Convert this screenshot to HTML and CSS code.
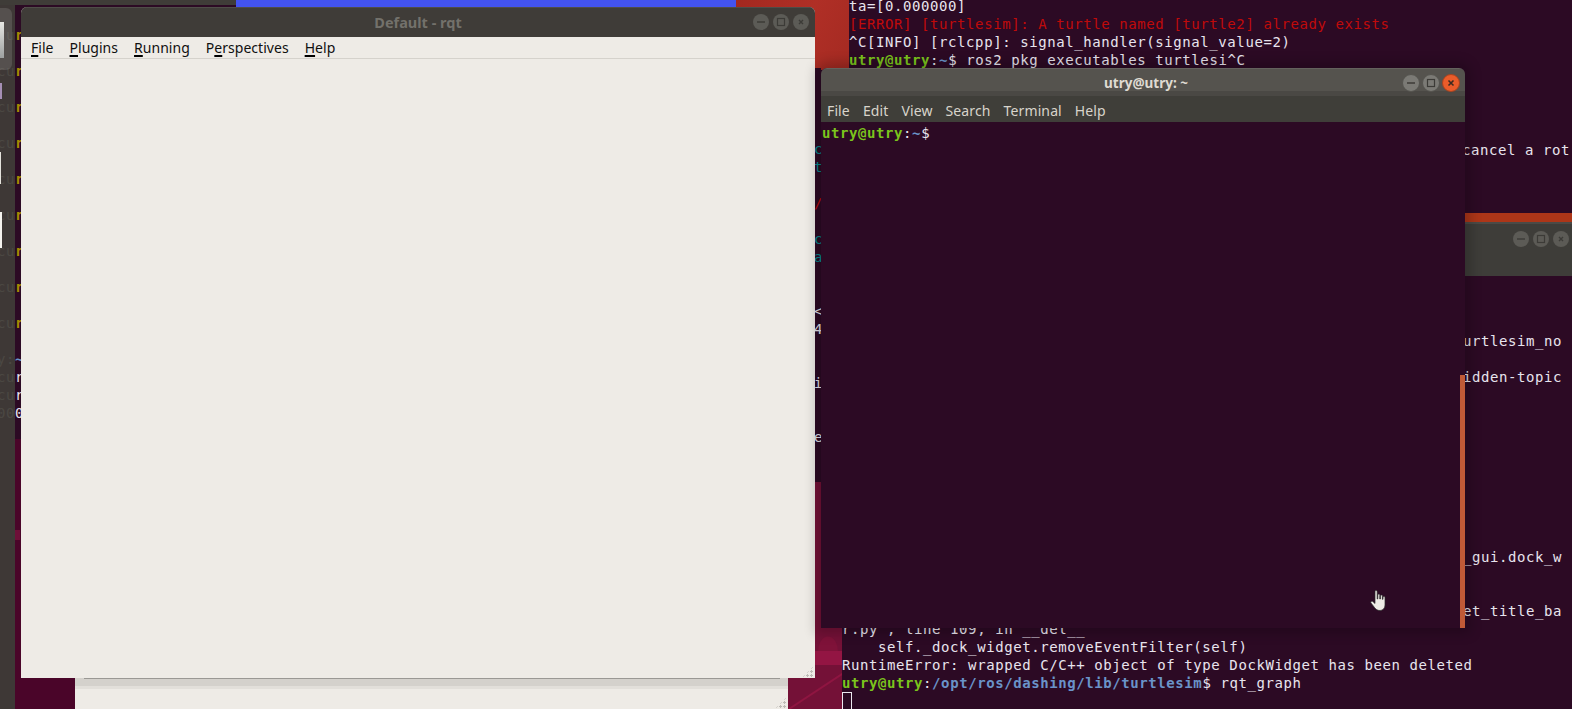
FILE: index.html
```html
<!DOCTYPE html>
<html lang="en">
<head>
<meta charset="utf-8">
<title>Default - rqt</title>
<link rel="stylesheet" href="styles.css">
</head>
<body>
<main class="desktop">
  <div class="wall-red"></div>
  <div class="wall-blue"></div>
  <div class="topbar"></div>
  <div class="wall-left"><span class="wall-spot"></span></div>
  <svg class="wall-art" width="60" height="229" viewBox="0 0 60 229">
    <rect width="60" height="229" fill="#741137"/>
    <path d="M33 183v-10c0-22 20-22 20 0v10z" fill="#7f1239"/>
    <rect x="30" y="171" width="28" height="14" fill="#931543"/>
    <path d="M4 229 60 192" stroke="#8f1541" stroke-width="2"/>
  </svg>

  <div class="win-behind"><div class="behind-shade"></div><span class="grip grip-behind"></span></div>

  <div class="term term-left">
    <div class="row"><span class="dim">cu</span><span class="yel">r</span></div>
    <div class="row">&nbsp;</div>
    <div class="row"><span class="dim">cu</span><span class="yel">r</span></div>
    <div class="row">&nbsp;</div>
    <div class="row"><span class="dim">cu</span><span class="yel">r</span></div>
    <div class="row">&nbsp;</div>
    <div class="row"><span class="dim">cu</span><span class="yel">r</span></div>
    <div class="row">&nbsp;</div>
    <div class="row"><span class="dim">cu</span><span class="yel">r</span></div>
    <div class="row">&nbsp;</div>
    <div class="row"><span class="dim">cu</span><span class="yel">r</span></div>
    <div class="row">&nbsp;</div>
    <div class="row"><span class="dim">cu</span><span class="yel">r</span></div>
    <div class="row">&nbsp;</div>
    <div class="row"><span class="dim">cu</span><span class="yel">r</span></div>
    <div class="row">&nbsp;</div>
    <div class="row"><span class="dim">cu</span><span class="yel">r</span></div>
    <div class="row">&nbsp;</div>
    <div class="row"><span class="dim">y:</span><span class="blu">~</span></div>
    <div class="row"><span class="dim">cu</span>r</div>
    <div class="row"><span class="dim">cu</span>r</div>
    <div class="row"><span class="dim">00</span>0</div>
  </div>

  <div class="term term-sliver">
    <div class="row teal">c</div>
    <div class="row teal">t</div>
    <div class="row">&nbsp;</div>
    <div class="row red">/</div>
    <div class="row">&nbsp;</div>
    <div class="row teal">c</div>
    <div class="row teal">a</div>
    <div class="row">&nbsp;</div>
    <div class="row">&nbsp;</div>
    <div class="row">&lt;</div>
    <div class="row">4</div>
    <div class="row">&nbsp;</div>
    <div class="row">&nbsp;</div>
    <div class="row">i</div>
    <div class="row">&nbsp;</div>
    <div class="row">&nbsp;</div>
    <div class="row">e</div>
  </div>

  <div class="term term-top">
    <div class="row">ta=[0.000000]</div>
    <div class="row red">[ERROR] [turtlesim]: A turtle named [turtle2] already exists</div>
    <div class="row">^C[INFO] [rclcpp]: signal_handler(signal_value=2)</div>
    <div class="row"><span class="grn">utry@utry</span>:<span class="blu">~</span>$ ros2 pkg executables turtlesi^C</div>
    <div class="row">&nbsp;</div>
    <div class="row">&nbsp;</div>
    <div class="row">&nbsp;</div>
    <div class="row">&nbsp;</div>
    <div class="row"><span class="cancel">cancel a rot</span></div>
  </div>

  <div class="win-back">
    <div class="back-stripe"></div>
    <div class="back-bar">
      <svg class="btn" viewBox="0 0 18 18"><circle cx="9" cy="9" r="8" fill="#5c5b56"/><path d="M5 9h8" stroke="#3c3b37" stroke-width="1.4"/></svg>
      <svg class="btn" viewBox="0 0 18 18"><circle cx="9" cy="9" r="8" fill="#5c5b56"/><rect x="5.5" y="5.5" width="7" height="7" fill="none" stroke="#3c3b37" stroke-width="1.2"/></svg>
      <svg class="btn" viewBox="0 0 18 18"><circle cx="9" cy="9" r="8" fill="#5c5b56"/><path d="M7 7l4 4M11 7l-4 4" stroke="#3c3b37" stroke-width="1.4"/></svg>
    </div>
  </div>

  <div class="term term-low">
    <div class="row rt">&nbsp;</div>
    <div class="row rt">&nbsp;</div>
    <div class="row rt">&nbsp;</div>
    <div class="row rt">urtlesim_no</div>
    <div class="row rt">&nbsp;</div>
    <div class="row rt">idden-topic</div>
    <div class="row rt">&nbsp;</div>
    <div class="row rt">&nbsp;</div>
    <div class="row rt">&nbsp;</div>
    <div class="row rt">&nbsp;</div>
    <div class="row rt">&nbsp;</div>
    <div class="row rt">&nbsp;</div>
    <div class="row rt">&nbsp;</div>
    <div class="row rt">&nbsp;</div>
    <div class="row rt">&nbsp;</div>
    <div class="row rt">_gui.dock_w</div>
    <div class="row rt">&nbsp;</div>
    <div class="row rt">&nbsp;</div>
    <div class="row rt">et_title_ba</div>
    <div class="row">r.py", line 109, in __del__</div>
    <div class="row">    self._dock_widget.removeEventFilter(self)</div>
    <div class="row">RuntimeError: wrapped C/C++ object of type DockWidget has been deleted</div>
    <div class="row"><span class="grn">utry@utry</span>:<span class="blu">/opt/ros/dashing/lib/turtlesim</span>$ rqt_graph</div>
    <div class="row"><span class="cursor"></span></div>
  </div>

  <aside class="launcher">
    <span class="lau-hl"></span>
    <span class="lau-ico ico1"></span>
    <span class="lau-ico ico2"></span>
    <span class="lau-ico ico3"></span>
    <span class="lau-ico ico4"></span>
  </aside>

  <section class="win-rqt">
    <header class="rqt-title">
      <span class="rqt-name">Default - rqt</span>
      <div class="btns">
        <svg class="btn" viewBox="0 0 18 18"><circle cx="9" cy="9" r="8" fill="#5c5b56"/><path d="M5 9h8" stroke="#3c3b37" stroke-width="1.4"/></svg>
        <svg class="btn" viewBox="0 0 18 18"><circle cx="9" cy="9" r="8" fill="#5c5b56"/><rect x="5.5" y="5.5" width="7" height="7" fill="none" stroke="#3c3b37" stroke-width="1.2"/></svg>
        <svg class="btn" viewBox="0 0 18 18"><circle cx="9" cy="9" r="8" fill="#5c5b56"/><path d="M7 7l4 4M11 7l-4 4" stroke="#3c3b37" stroke-width="1.4"/></svg>
      </div>
    </header>
    <nav class="rqt-menu">
      <span><u>F</u>ile</span>
      <span><u>P</u>lugins</span>
      <span><u>R</u>unning</span>
      <span>P<u>e</u>rspectives</span>
      <span><u>H</u>elp</span>
    </nav>
    <div class="rqt-body"><span class="grip grip-rqt"></span></div>
  </section>

  <section class="win-front">
    <header class="front-title">
      <span class="front-name">utry@utry: ~</span>
      <div class="btns">
        <svg class="btn" viewBox="0 0 18 18"><circle cx="9" cy="9" r="8.5" fill="#7b7a75" stroke="#55544f"/><path d="M5 9h8" stroke="#3c3b37" stroke-width="1.4"/></svg>
        <svg class="btn" viewBox="0 0 18 18"><circle cx="9" cy="9" r="8.5" fill="#7b7a75" stroke="#55544f"/><rect x="5.5" y="5.5" width="7" height="7" fill="none" stroke="#3c3b37" stroke-width="1.2"/></svg>
        <svg class="btn" viewBox="0 0 18 18"><circle cx="9" cy="9" r="8.5" fill="#e95c2a" stroke="#a8431f"/><path d="M6.5 6.5l5 5M11.5 6.5l-5 5" stroke="#3c2a20" stroke-width="1.6"/></svg>
      </div>
    </header>
    <nav class="front-menu">
      <span>File</span><span>Edit</span><span>View</span><span>Search</span><span>Terminal</span><span>Help</span>
    </nav>
    <div class="front-body">
      <div class="row"><span class="grn">utry@utry</span>:<span class="blu">~</span>$</div>
    </div>
  </section>

  <div class="strip"></div>

  <svg class="pointer" width="18" height="23" viewBox="0 0 18 23">
    <path d="M6 1.5c1 0 1.2.6 1.2 1.500v7l.6-.1V6.200c0-1.500 2-1.500 2 0v3.800l.6 0V7c0-1.400 2-1.400 2 0v3.300l.6 0V8.500c0-1.300 2-1.300 2 0V16c0 3-2 5.500-5 5.500-2.500 0-4-1-5.500-3L1 14c-.8-1.200.8-2.400 2-1.300l2 1.800V3c0-1 .2-1.500 1-1.500z" fill="#eeebe6" stroke="#2a2a2a" stroke-width=".7"/>
  </svg>
</main>
</body>
</html>
```
FILE: styles.css
```css
html, body {
  margin: 0;
  padding: 0;
  overflow: hidden;
}

.desktop {
  position: relative;
  width: 1572px;
  height: 709px;
  overflow: hidden;
  background: #2c0a24;
}

.wall-red {
  position: absolute;
  left: 736px;
  top: 0;
  width: 113px;
  height: 70px;
  background: linear-gradient(115deg, #a3281f 0%, #b02f26 55%, #a52a22 100%);
}

.wall-blue {
  position: absolute;
  left: 236px;
  top: 0;
  width: 500px;
  height: 8px;
  background: #4353ef;
}

.topbar {
  position: absolute;
  left: 0;
  top: 0;
  width: 236px;
  height: 5px;
  background: #3f3c38;
}

.wall-left {
  position: absolute;
  left: 15px;
  top: 439px;
  width: 60px;
  height: 270px;
  background: #4a0529;
}

.wall-spot {
  display: block;
  width: 5px;
  height: 10px;
  margin-top: 91px;
  background: #6e0f38;
}

.wall-art {
  position: absolute;
  left: 785px;
  top: 480px;
}

.win-behind {
  position: absolute;
  left: 75px;
  top: 677px;
  width: 713px;
  height: 32px;
  background: #eeebe6;
}

.behind-shade {
  height: 12px;
  background:
    linear-gradient(#9a9894, #9a9894) 9px 0 / calc(100% - 17px) 2px no-repeat,
    linear-gradient(#d4d1cc 0 9px, #e2dfda 9px 12px);
}

.grip {
  position: absolute;
  right: 1px;
  bottom: 0;
  width: 12px;
  height: 12px;
  background: radial-gradient(circle at 1.500px 1.500px, #bdbab5 1px, transparent 1.100px) 0 0 / 4px 4px;
  clip-path: polygon(100% 0, 100% 100%, 0 100%);
}

.term {
  position: absolute;
  overflow: hidden;
  background: #2c0a24;
  color: #e8e4ee;
  font-family: "DejaVu Sans Mono", "Liberation Mono", monospace;
  font-size: 14px;
  letter-spacing: .58px;
  line-height: 18px;
}

.row {
  height: 18px;
  white-space: pre;
}

.rt {
  text-align: right;
}

.red { color: #c00a0a; }
.grn { color: #7bc51c; font-weight: 700; }
.blu { color: #6a93c9; font-weight: 700; }
.teal { color: #06888f; }
.yel { color: #a68a00; font-weight: 700; }
.dim { color: #a8a49a; }

.term-left {
  left: -3px;
  top: 5px;
  width: 24px;
  height: 434px;
  padding-top: 21px;
  box-sizing: border-box;
}

.term-sliver {
  left: 815px;
  top: 68px;
  width: 6px;
  height: 414px;
  padding-top: 72px;
  box-sizing: border-box;
  text-indent: -1px;
}

.term-top {
  left: 849px;
  top: 0;
  width: 723px;
  height: 213px;
}

.term-top .row:first-child {
  margin-top: -3px;
}

.cancel {
  margin-left: 613px;
}

.term-low {
  left: 842px;
  top: 276px;
  width: 730px;
  height: 433px;
  padding-top: 2px;
  box-sizing: border-box;
}

.term-low .rt {
  width: 720px;
}

.cursor {
  display: block;
  width: 10px;
  height: 18px;
  box-sizing: border-box;
  border: 1px solid #ece8f0;
}

.win-back {
  position: absolute;
  left: 1465px;
  top: 213px;
  width: 107px;
  height: 63px;
}

.back-stripe {
  height: 9px;
  background: #ad3618;
}

.back-bar {
  display: flex;
  justify-content: flex-end;
  align-items: flex-start;
  gap: 2px;
  height: 54px;
  padding: 6px 2px 0 0;
  box-sizing: border-box;
  background: #3e3d39;
  border-top: 2px solid #4b4a46;
}

.launcher {
  position: absolute;
  left: 0;
  top: 5px;
  width: 15px;
  height: 704px;
  background: rgba(64, 61, 57, .9);
}

.lau-hl {
  position: absolute;
  left: -6px;
  top: 3px;
  width: 18px;
  height: 62px;
  border-radius: 6px;
  background: rgba(255, 255, 255, .12);
}

.lau-ico {
  position: absolute;
  left: 0;
}

.ico1 { top: 17px; width: 4px; height: 36px; background: linear-gradient(#e8e8e4, #9da0a0); }
.ico2 { top: 78px; width: 2px; height: 16px; background: #a58fb5; }
.ico3 { top: 147px; width: 1px; height: 32px; background: #e4e2dc; }
.ico4 { top: 207px; width: 2px; height: 36px; background: #f4f2ee; }

.win-rqt {
  position: absolute;
  left: 21px;
  top: 7px;
  width: 794px;
  height: 671px;
  display: flex;
  flex-direction: column;
  border-radius: 6px 6px 0 0;
  overflow: hidden;
  background: #eeebe6;
}

.rqt-title {
  position: relative;
  flex: none;
  height: 30px;
  display: flex;
  align-items: center;
  justify-content: center;
  padding-bottom: 2px;
  background: #3f3c38;
  border-top: 1px solid #4f4d48;
  box-sizing: border-box;
}

.rqt-name {
  color: #73716b;
  font: 700 14.5px "Noto Sans", sans-serif;
}

.btns {
  position: absolute;
  right: 5px;
  top: 5px;
  display: flex;
  gap: 2px;
}

.btn {
  width: 18px;
  height: 18px;
  display: block;
}

.rqt-menu {
  flex: none;
  display: flex;
  gap: 16px;
  height: 22px;
  padding-left: 10px;
  box-sizing: border-box;
  align-items: center;
  color: #101010;
  font: 14px/20px "Noto Sans", sans-serif;
  letter-spacing: .03px;
  border-bottom: 1px solid #d5d2cc;
}

.rqt-menu u {
  text-decoration: underline 2px #000;
  text-underline-offset: 2px;
  text-decoration-skip-ink: none;
}

.rqt-body {
  position: relative;
  flex: 1;
}

.win-front {
  position: absolute;
  left: 821px;
  top: 68px;
  width: 644px;
  height: 560px;
  display: flex;
  flex-direction: column;
  border-radius: 6px 6px 0 0;
  overflow: hidden;
  background: #2c0a24;
  box-shadow: 0 0 12px 6px rgba(0, 0, 0, .2);
}

.front-title {
  position: relative;
  flex: none;
  height: 28px;
  display: flex;
  align-items: center;
  justify-content: center;
  padding: 1px 0 0 6px;
  background: linear-gradient(#55534e 0, #55534e 22px, #4a4844 22px);
  border-top: 1px solid #64625d;
  box-sizing: border-box;
}

.front-name {
  color: #dfdbd2;
  font: 700 13.5px "Noto Sans", sans-serif;
}

.front-title .btns {
  right: 5px;
  top: 5px;
}

.front-menu {
  flex: none;
  height: 26px;
  display: flex;
  gap: 13px;
  align-items: center;
  padding: 2px 0 0 6px;
  box-sizing: border-box;
  background: #3f3e39;
  color: #d8d4cb;
  font: 14px "Noto Sans", sans-serif;
  letter-spacing: .12px;
}

.front-body {
  flex: 1;
  color: #e8e4ee;
  font-family: "DejaVu Sans Mono", "Liberation Mono", monospace;
  font-size: 14px;
  letter-spacing: .58px;
  line-height: 18px;
  padding: 2px 0 0 1px;
}

.strip {
  position: absolute;
  left: 1460px;
  top: 375px;
  width: 5px;
  height: 253px;
  background: #c05a37;
}

.pointer {
  position: absolute;
  left: 1370px;
  top: 589px;
}
```
